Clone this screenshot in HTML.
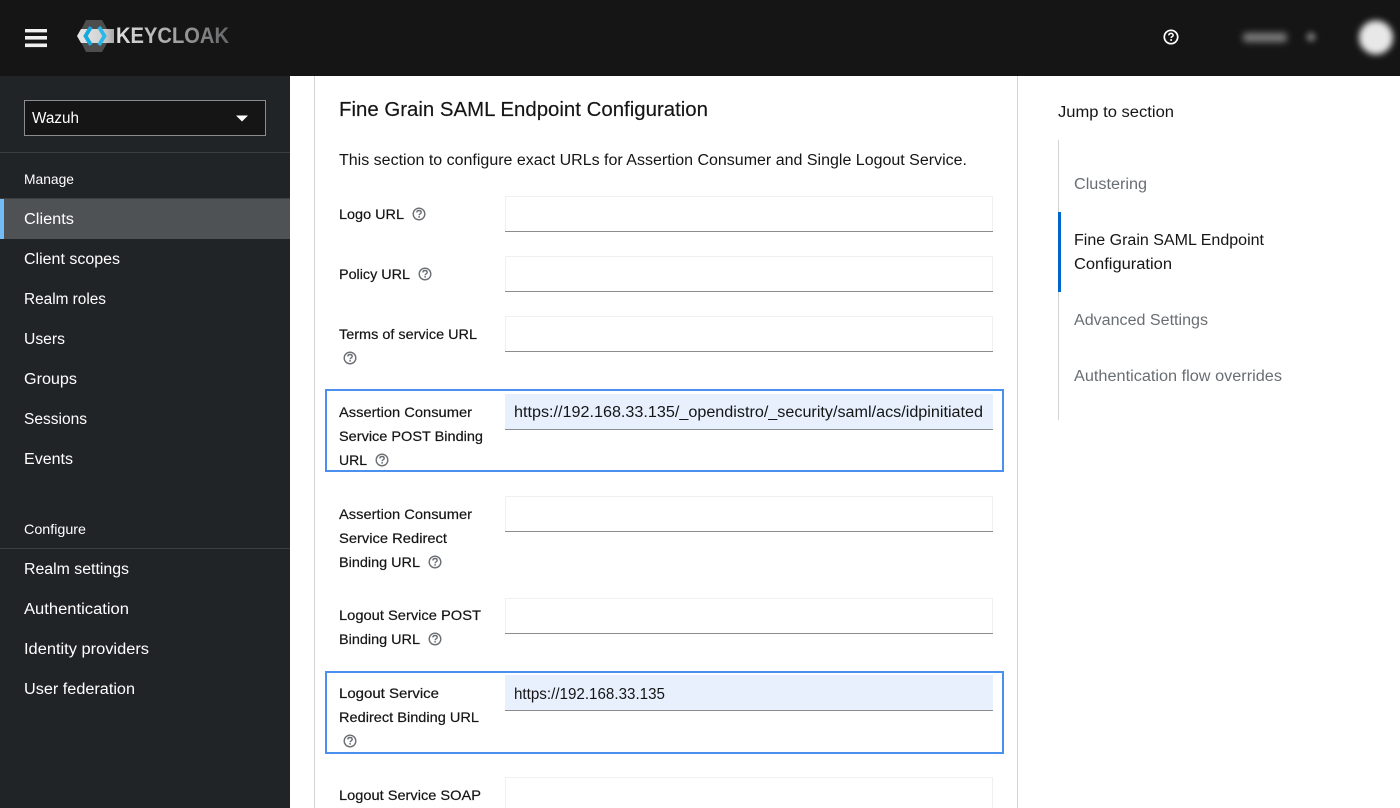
<!DOCTYPE html>
<html><head><meta charset="utf-8"><title>Keycloak</title>
<style>
html,body{margin:0;padding:0;width:1400px;height:808px;overflow:hidden;background:#fff}
svg{display:block}
text{font-family:"Liberation Sans",sans-serif;}
.n{font-size:15.5px;fill:#fff}
.s{font-size:14px;fill:#fff}
.l{font-size:14px;fill:#151515;stroke:#151515;stroke-width:.2}
.v{font-size:15.5px;fill:#151515}
.j{font-size:15.5px;fill:#6a6e73}
</style></head><body>
<svg width="1400" height="808" viewBox="0 0 1400 808" xmlns="http://www.w3.org/2000/svg">
<defs>
<filter id="b1" x="-50%" y="-200%" width="200%" height="500%"><feGaussianBlur stdDeviation="3.5"/></filter>
<filter id="b2" x="-100%" y="-100%" width="300%" height="300%"><feGaussianBlur stdDeviation="2.6"/></filter>
<filter id="b3" x="-50%" y="-50%" width="200%" height="200%"><feGaussianBlur stdDeviation="3.2"/></filter>
<linearGradient id="kg" x1="0" x2="1" y1="0" y2="0"><stop offset="0" stop-color="#e0e0e0"/><stop offset=".5" stop-color="#a6a6a6"/><stop offset="1" stop-color="#636567"/></linearGradient>
<linearGradient id="bar" x1="0" x2="1" y1="0" y2="0"><stop offset="0" stop-color="#e6e6e6"/><stop offset=".7" stop-color="#d2d2d2"/><stop offset="1" stop-color="#a8a8a8"/></linearGradient>
<g id="h" fill="none">
<circle cx="0" cy="0" r="5.8" stroke="#6a6e73" stroke-width="1.4"/>
<path d="M-2.1-1.5C-2.1-3-1-3.5 0-3.5 1.2-3.5 2.2-2.8 2.2-1.5 2.2-.2.1-.2.1 1.2" stroke="#6a6e73" stroke-width="1.4"/>
<circle cx=".1" cy="2.9" r=".9" fill="#6a6e73"/>
</g>
</defs>

<!-- header -->
<rect x="0" y="0" width="1400" height="76" fill="#151515"/>
<rect x="25" y="29" width="22" height="3.4" fill="#f0f0f0"/>
<rect x="25" y="36" width="22" height="3.6" fill="#f0f0f0"/>
<rect x="25" y="43.5" width="22" height="3.6" fill="#f0f0f0"/>
<!-- logo -->
<path d="M86 20H102L111 36 102 52H86L78 36Z" fill="#4d4d4d"/>
<path d="M77 36L81 29H114V43H81Z" fill="url(#bar)"/>
<path d="M91 27L85.500 36 91 45" fill="none" stroke="#12a9dc" stroke-width="3.8"/>
<path d="M99 27L104.500 36 99 45" fill="none" stroke="#2bb8e8" stroke-width="3.8"/>
<text x="116" y="43" font-size="22" font-weight="700" fill="url(#kg)" textLength="113" lengthAdjust="spacingAndGlyphs">KEYCLOAK</text>
<!-- help -->
<circle cx="1171" cy="37" r="6.7" fill="none" stroke="#fff" stroke-width="1.7"/>
<path d="M1168.8 35.4C1168.8 33.9 1170 33.4 1171 33.4 1172.2 33.4 1173.2 34.1 1173.2 35.3 1173.2 36.6 1171.1 36.6 1171.1 38" fill="none" stroke="#fff" stroke-width="1.5"/>
<circle cx="1171.1" cy="40" r="1" fill="#fff"/>
<!-- blurred user -->
<rect x="1243" y="33" width="44" height="9" rx="3" fill="#7d7d7d" filter="url(#b1)"/>
<circle cx="1311" cy="37" r="5" fill="#686868" filter="url(#b2)"/>
<circle cx="1376" cy="37.500" r="17" fill="#e8e8e8" filter="url(#b3)"/>

<!-- sidebar -->
<rect x="0" y="76" width="290" height="732" fill="#212427"/>
<rect x="24.500" y="100.500" width="241" height="35" fill="#151515" stroke="#8a8d90"/>
<text x="32" y="123" class="n" textLength="47" lengthAdjust="spacingAndGlyphs">Wazuh</text>
<path d="M236 115.500H248L242 121.500Z" fill="#fff"/>
<rect x="0" y="152" width="290" height="1" fill="#3c3f42"/>
<text x="24" y="184" class="s" textLength="50" lengthAdjust="spacingAndGlyphs">Manage</text>
<rect x="0" y="198" width="290" height="41" fill="#4f5255"/>
<rect x="0" y="198" width="290" height="1" fill="#3c3f42"/>
<rect x="0" y="199" width="4" height="40" fill="#73bcf7"/>
<text x="24" y="224" class="n" textLength="50" lengthAdjust="spacingAndGlyphs">Clients</text>
<text x="24" y="264" class="n" textLength="96" lengthAdjust="spacingAndGlyphs">Client scopes</text>
<text x="24" y="304" class="n" textLength="82" lengthAdjust="spacingAndGlyphs">Realm roles</text>
<text x="24" y="344" class="n" textLength="41" lengthAdjust="spacingAndGlyphs">Users</text>
<text x="24" y="384" class="n" textLength="53" lengthAdjust="spacingAndGlyphs">Groups</text>
<text x="24" y="424" class="n" textLength="63" lengthAdjust="spacingAndGlyphs">Sessions</text>
<text x="24" y="464" class="n" textLength="49" lengthAdjust="spacingAndGlyphs">Events</text>
<text x="24" y="534" class="s" textLength="62" lengthAdjust="spacingAndGlyphs">Configure</text>
<rect x="0" y="548" width="290" height="1" fill="#3c3f42"/>
<text x="24" y="574" class="n" textLength="105" lengthAdjust="spacingAndGlyphs">Realm settings</text>
<text x="24" y="614" class="n" textLength="105" lengthAdjust="spacingAndGlyphs">Authentication</text>
<text x="24" y="654" class="n" textLength="125" lengthAdjust="spacingAndGlyphs">Identity providers</text>
<text x="24" y="694" class="n" textLength="111" lengthAdjust="spacingAndGlyphs">User federation</text>

<!-- main -->
<rect x="314" y="76" width="1" height="732" fill="#d2d2d2"/>
<rect x="1017" y="76" width="1" height="732" fill="#d2d2d2"/>
<text x="339" y="116" font-size="20" fill="#151515" stroke="#151515" stroke-width=".15" textLength="369" lengthAdjust="spacingAndGlyphs">Fine Grain SAML Endpoint Configuration</text>
<text x="339" y="165" class="v" textLength="628" lengthAdjust="spacingAndGlyphs">This section to configure exact URLs for Assertion Consumer and Single Logout Service.</text>

<!-- inputs -->
<g fill="#fff" stroke="#f0f0f0">
<rect x="505.500" y="196.500" width="487" height="35"/>
<rect x="505.500" y="256.500" width="487" height="35"/>
<rect x="505.500" y="316.500" width="487" height="35"/>
<rect x="505.500" y="496.500" width="487" height="35"/>
<rect x="505.500" y="598.500" width="487" height="35"/>
<rect x="505.500" y="777.500" width="487" height="40"/>
</g>
<g fill="#8a8d90">
<rect x="505" y="231" width="488" height="1"/>
<rect x="505" y="291" width="488" height="1"/>
<rect x="505" y="351" width="488" height="1"/>
<rect x="505" y="531" width="488" height="1"/>
<rect x="505" y="633" width="488" height="1"/>
</g>
<!-- highlighted -->
<rect x="326" y="390" width="677" height="81" fill="none" stroke="#4a90ee" stroke-width="2"/>
<rect x="326" y="672" width="677" height="81" fill="none" stroke="#4a90ee" stroke-width="2"/>
<rect x="505" y="394" width="488" height="36" fill="#e8f0fe"/>
<rect x="505" y="429" width="488" height="1" fill="#8a8d90"/>
<rect x="505" y="675" width="488" height="36" fill="#e8f0fe"/>
<rect x="505" y="710" width="488" height="1" fill="#8a8d90"/>
<text x="514" y="417" class="v" textLength="469" lengthAdjust="spacingAndGlyphs">https://192.168.33.135/_opendistro/_security/saml/acs/idpinitiated</text>
<text x="514" y="699" class="v" textLength="151" lengthAdjust="spacingAndGlyphs">https://192.168.33.135</text>

<!-- labels -->
<text x="339" y="219" class="l" textLength="65" lengthAdjust="spacingAndGlyphs">Logo URL</text>
<use href="#h" x="419" y="214"/>
<text x="339" y="279" class="l" textLength="71" lengthAdjust="spacingAndGlyphs">Policy URL</text>
<use href="#h" x="425" y="274"/>
<text x="339" y="339" class="l" textLength="138" lengthAdjust="spacingAndGlyphs">Terms of service URL</text>
<use href="#h" x="350" y="358"/>
<text x="339" y="417" class="l" textLength="133" lengthAdjust="spacingAndGlyphs">Assertion Consumer</text>
<text x="339" y="441" class="l" textLength="144" lengthAdjust="spacingAndGlyphs">Service POST Binding</text>
<text x="339" y="465" class="l" textLength="28" lengthAdjust="spacingAndGlyphs">URL</text>
<use href="#h" x="382" y="460"/>
<text x="339" y="519" class="l" textLength="133" lengthAdjust="spacingAndGlyphs">Assertion Consumer</text>
<text x="339" y="543" class="l" textLength="108" lengthAdjust="spacingAndGlyphs">Service Redirect</text>
<text x="339" y="567" class="l" textLength="81" lengthAdjust="spacingAndGlyphs">Binding URL</text>
<use href="#h" x="435" y="562"/>
<text x="339" y="620" class="l" textLength="142" lengthAdjust="spacingAndGlyphs">Logout Service POST</text>
<text x="339" y="644" class="l" textLength="81" lengthAdjust="spacingAndGlyphs">Binding URL</text>
<use href="#h" x="435" y="639"/>
<text x="339" y="698" class="l" textLength="100" lengthAdjust="spacingAndGlyphs">Logout Service</text>
<text x="339" y="722" class="l" textLength="140" lengthAdjust="spacingAndGlyphs">Redirect Binding URL</text>
<use href="#h" x="350" y="741"/>
<text x="339" y="800" class="l" textLength="142" lengthAdjust="spacingAndGlyphs">Logout Service SOAP</text>

<!-- jump links -->
<text x="1058" y="117" class="v" textLength="116" lengthAdjust="spacingAndGlyphs">Jump to section</text>
<rect x="1058" y="140" width="1" height="280" fill="#d2d2d2"/>
<rect x="1058" y="212" width="3" height="80" fill="#06c"/>
<text x="1074" y="189" class="j" textLength="73" lengthAdjust="spacingAndGlyphs">Clustering</text>
<text x="1074" y="245" class="v" textLength="190" lengthAdjust="spacingAndGlyphs">Fine Grain SAML Endpoint</text>
<text x="1074" y="269" class="v" textLength="98" lengthAdjust="spacingAndGlyphs">Configuration</text>
<text x="1074" y="325" class="j" textLength="134" lengthAdjust="spacingAndGlyphs">Advanced Settings</text>
<text x="1074" y="381" class="j" textLength="208" lengthAdjust="spacingAndGlyphs">Authentication flow overrides</text>
</svg>
</body></html>
